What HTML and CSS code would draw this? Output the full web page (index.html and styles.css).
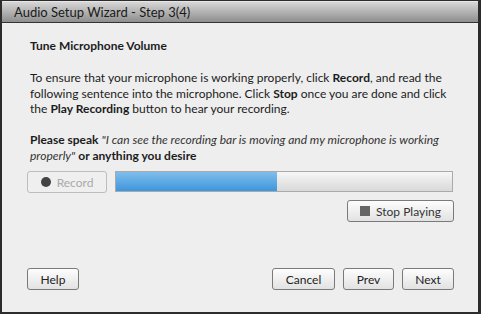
FILE: index.html
```html
<!DOCTYPE html>
<html lang="en">
<head>
    <meta charset="UTF-8">
    <title>Audio Setup Wizard</title>
    <link rel="stylesheet" href="styles.css">
</head>
<body>
    <div class="window">
        <div class="titlebar">Audio Setup Wizard - Step 3(4)</div>
        <div class="content">
            <h2 class="step-title">Tune Microphone Volume</h2>
            <p class="intro">To ensure that your microphone is working properly, click <b>Record</b>, and read the following sentence into the microphone. Click <b>Stop</b> once you are done and click the <b>Play Recording</b> button to hear your recording.</p>
            <p class="speak"><b>Please speak</b> <i>"I can see the recording bar is moving and my microphone is working properly"</i> <b>or anything you desire</b></p>

            <!-- Record button and level meter -->
            <div class="record-row">
                <button type="button" class="btn btn-record" disabled><span class="dot"></span>Record</button>
                <div class="meter"><div class="meter-fill" style="width: 48%;"></div></div>
            </div>
            <div class="play-row">
                <button type="button" class="btn btn-stop"><span class="square"></span>Stop Playing</button>
            </div>

            <!-- Wizard navigation -->
            <div class="footer">
                <button type="button" class="btn btn-help">Help</button>
                <div class="nav">
                    <button type="button" class="btn btn-cancel">Cancel</button>
                    <button type="button" class="btn btn-prev">Prev</button>
                    <button type="button" class="btn btn-next">Next</button>
                </div>
            </div>
        </div>
    </div>
</body>
</html>
```

FILE: styles.css
```css
/* Dark desktop behind the dialog */
body {
    margin: 0;
    background: #2a2a2a;
    font-family: 'Lato', 'Open Sans', sans-serif;
    color: #1c1c1c;
}
/* Dialog frame */
.window {
    width: 481px;
    height: 314px;
    box-sizing: border-box;
    display: flex;
    flex-direction: column;
    border-top: 1px solid #2c2c2c;
    border-left: 2px solid #2c2c2c;
    border-right: 3px solid #2c2c2c;
    border-bottom: 2px solid #2c2c2c;
    background: #eeeeee;
}
.titlebar {
    height: 21px;
    line-height: 21px;
    padding-left: 12px;
    font-size: 13px;
    color: #1a1a1a;
    background: linear-gradient(#d6d6d6, #8e8e8e);
    border-top: 1px solid #e6e6e6;
    box-sizing: border-box;
    border-bottom: 1px solid #333;
    height: 22px;
}
.content {
    flex: 1;
    display: flex;
    flex-direction: column;
    padding: 0 24px 22px 25px;
}
.step-title {
    margin: 15px 0 0 3px;
    font-size: 12px;
    line-height: 16px;
    font-weight: bold;
}
.intro,
.speak {
    margin: 16px 0 0 3px;
    font-size: 12px;
    line-height: 15.5px;
}
.speak {
    margin-top: 15.5px;
}
.speak i {
    color: #333;
}
/* Buttons */
.btn {
    height: 22px;
    box-sizing: border-box;
    padding: 0;
    border: 1px solid #7a7a7a;
    border-radius: 3px;
    background: linear-gradient(#fdfdfd, #e2e2e2);
    font-family: inherit;
    font-size: 12px;
    color: #222;
    display: flex;
    align-items: center;
    justify-content: center;
}
.record-row {
    display: flex;
    gap: 8px;
    margin-top: 8px;
}
.btn-record {
    width: 80px;
    border-color: #bdbdbd;
    background: #efefef;
    color: #a9a9a9;
}
.dot {
    width: 10px;
    height: 10px;
    border-radius: 50%;
    background: #444;
    margin-right: 6px;
}
.meter {
    width: 338px;
    height: 21px;
    box-sizing: border-box;
    border: 1px solid #aaaaaa;
    background: linear-gradient(#f6f6f6, #d9d9d9);
}
.meter-fill {
    height: 100%;
    background: linear-gradient(#80bdeb, #3e96dd);
}
.play-row {
    display: flex;
    justify-content: flex-end;
    margin-top: 7px;
    padding-right: 0;
}
.btn-stop {
    width: 107px;
    color: #333;
}
.square {
    width: 10px;
    height: 10px;
    background: #666;
    margin-right: 6px;
}
.footer {
    margin-top: auto;
    display: flex;
    justify-content: space-between;
}
.nav {
    display: flex;
    gap: 8px;
}
.btn-help { width: 52px; }
.btn-cancel { width: 63px; }
.btn-prev { width: 51px; }
.btn-next { width: 52px; }
```
